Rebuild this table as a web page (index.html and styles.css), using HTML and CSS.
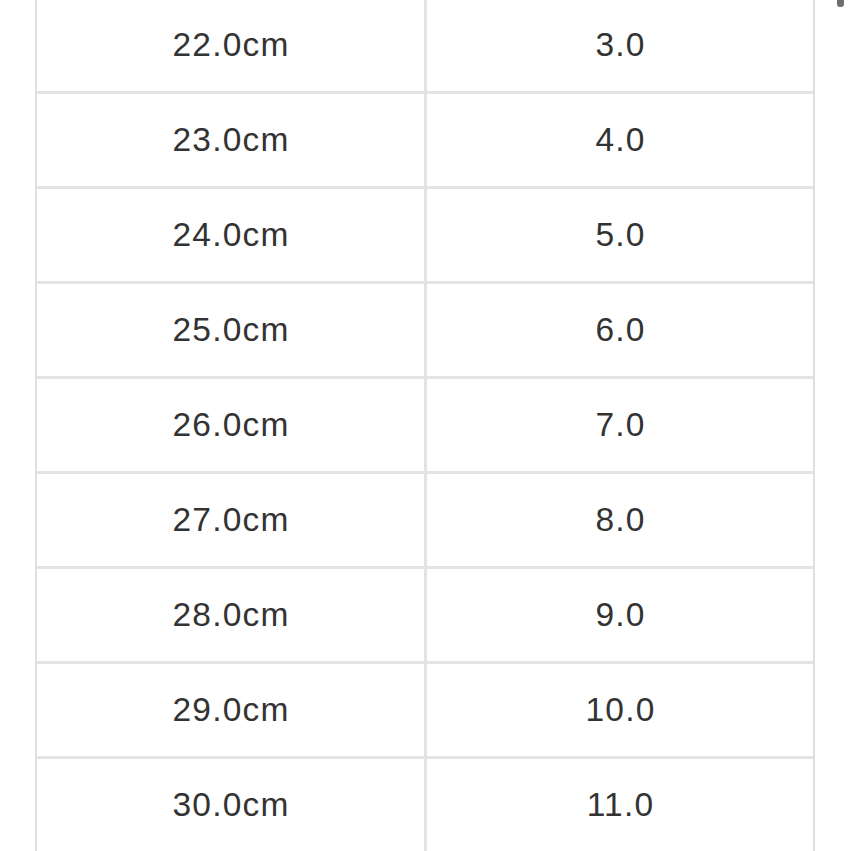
FILE: index.html
```html
<!DOCTYPE html>
<html>
<head>
<meta charset="utf-8">
<link rel="stylesheet" href="styles.css">
</head>
<body>
<div class="scroll-thumb"></div>
<div class="size-table">
  <div class="row"><div class="cell left">22.0cm</div><div class="cell">3.0</div></div>
  <div class="row"><div class="cell left">23.0cm</div><div class="cell">4.0</div></div>
  <div class="row"><div class="cell left">24.0cm</div><div class="cell">5.0</div></div>
  <div class="row"><div class="cell left">25.0cm</div><div class="cell">6.0</div></div>
  <div class="row"><div class="cell left">26.0cm</div><div class="cell">7.0</div></div>
  <div class="row"><div class="cell left">27.0cm</div><div class="cell">8.0</div></div>
  <div class="row"><div class="cell left">28.0cm</div><div class="cell">9.0</div></div>
  <div class="row"><div class="cell left">29.0cm</div><div class="cell">10.0</div></div>
  <div class="row"><div class="cell left">30.0cm</div><div class="cell">11.0</div></div>
</div>
</body>
</html>
```
FILE: styles.css
```css
html, body {
  margin: 0;
  padding: 0;
  background: #fff;
  overflow: hidden;
  height: 851px;
}
body {
  font-family: "Liberation Sans", Arial, sans-serif;
  color: #333;
}
.size-table {
  margin: -4px 0 0 35px;
  width: 780px;
  box-sizing: border-box;
  border-top: 3px solid #e3e3e3;
  border-left: 2px solid #e0e0e0;
  border-right: 2px solid #e0e0e0;
}
.row {
  display: grid;
  grid-template-columns: 390px 1fr;
  height: 95px;
  box-sizing: border-box;
  border-bottom: 3px solid #e3e3e3;
}
.cell {
  display: flex;
  align-items: center;
  justify-content: center;
  font-size: 33.5px;
  letter-spacing: 1.2px;
  padding-left: 1px;
}
.cell.left {
  border-right: 3px solid #e3e3e3;
}
.scroll-thumb {
  position: absolute;
  left: 837px;
  top: -4px;
  width: 7px;
  height: 11px;
  border-radius: 3px;
  background: #6e6e6e;
}
```
